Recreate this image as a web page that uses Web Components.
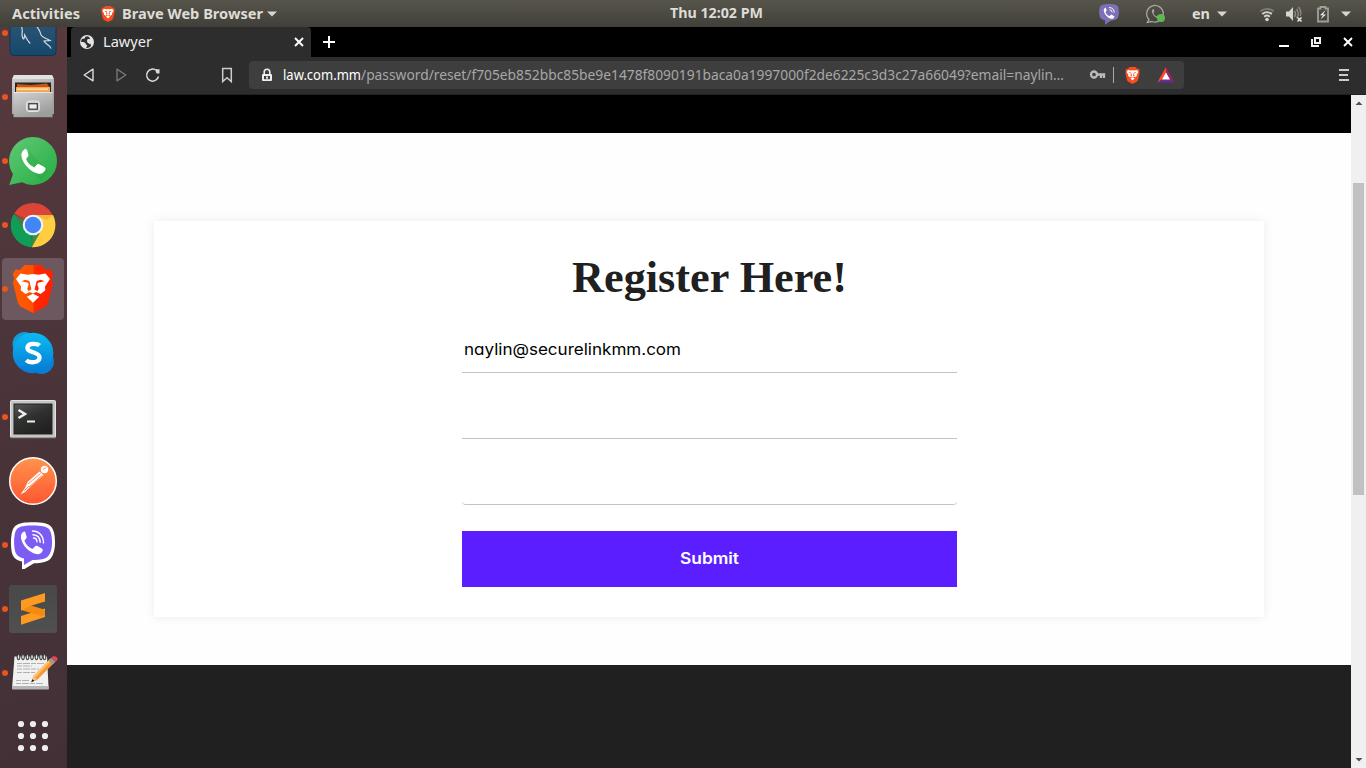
<!DOCTYPE html>
<html lang="en">
<head>
<meta charset="utf-8">
<title>Lawyer</title>
<style>
html,body{margin:0;height:100%;overflow:hidden;background:#000}
body{font-family:"Noto Sans","Open Sans",sans-serif}
</style>
</head>
<body>
<desktop-shell></desktop-shell>
<script>
const brave = (bg = 'url(#lg)') => `<defs><linearGradient id="lg"><stop offset="0" stop-color="#ff5a00"/><stop offset=".49" stop-color="#ff5000"/><stop offset=".54" stop-color="#ff2800"/><stop offset="1" stop-color="#ff2000"/></linearGradient></defs>
<path d="M15.500 0h17l4.500 5 4.500-.4 2.800 4.900-1.800 4.300 1.700 3.800-5 20q-.8 2.500-3 4.200L24 48l-12.200-6.200q-2.200-1.700-3-4.200l-5-20 1.700-3.800-1.800-4.300L6.500 4.600l4.500.4z" fill="${bg}"/>
<path fill="#fff" fill-rule="evenodd" d="M11.500 8.500l7 1.200 5.500-.8 5.500.8 7-1.200L41 14l-5 7.500.3 3.800L31.500 29 24 25.500 16.500 29l-4.800-3.700.3-3.800L7 14zM12.500 16.300l6.500 1.400.7 1.800-1.500 4 1.300 2.700 3-1.700L20.300 16l-4-1.200zM35.500 16.300l-6.500 1.400-.7 1.800 1.500 4-1.300 2.700-3-1.700L27.700 16l4-1.200z"/>
<path fill="#fff" d="M19.800 26.500l4.200-3 4.200 3-4.200 2zM17.800 31.800l6.200-3 6.200 3-6.200 6z"/>`;
const phone = 'M6.600 3.200C5 4 3.500 6 4 9c1.200 6.500 7 12.400 13.300 14 2.800.6 5-.8 5.700-2.700.4-1.200.2-1.700-.6-2.200l-4.200-2.300c-.8-.3-1.300-.2-1.800.4l-1.300 1.600c-.5.600-1 .6-1.700.3-2.900-1.400-5-3.600-6.100-6.200-.3-.6-.1-1 .3-1.500l1.100-1.400c.4-.6.4-1 .2-1.700L7.800 3.800c-.3-.7-.6-.9-1.200-.6z';
const ICONS = {
mysql:[48,`<defs><linearGradient id="g" x2="0" y2="1"><stop stop-color="#345a78"/><stop offset="1" stop-color="#15486b"/></linearGradient></defs><rect x="1" y="0" width="46" height="46.500" rx="4" fill="url(#g)" stroke="#17344e"/><g fill="none" stroke="#d5dde4" stroke-width="1.200"><path d="M12.500 18c2 4-.5 7 1 10 1 4 2 1 2.200-2 1 2 2 5 5.500 8.500"/><path d="M27 16c2 4 4 5 5 10 2 3 5 3 9 5.500l-6 .5c1 3 5 3 7 7.500"/></g>`],
files:[48,`<defs><linearGradient id="g" x2=".5" y2="1"><stop stop-color="#d2d2d2"/><stop offset="1" stop-color="#9d9d9d"/></linearGradient></defs><path d="M5 2h38l2 5v34H3V7z" fill="url(#g)"/><path d="M5 2h38l2 4H3z" fill="#e2e2e2"/><path d="M6 9.500h36V20H6z" fill="#292522"/><path d="M8 11l14 1 16-1.500 2 3V20H8z" fill="#c5541c"/><path d="M7 14h34v6H7z" fill="#f2a850"/><path d="M8 15.500h31v1.300H8z" fill="#ffe5b8"/><path d="M4.500 19h39v25h-39z" fill="url(#g)"/><path d="M4.500 19h39v.8h-39z" fill="#eee"/><rect x="17.500" y="28" width="13" height="10.500" rx="2.500" fill="#ccc" stroke="#e4e4e4"/><rect x="19.800" y="30.700" width="8.500" height="5.500" fill="#eee" stroke="#444" stroke-width="1.300"/><path d="M5 44.500h39" stroke="#5a5052"/>`],
whatsapp:[48,`<defs><linearGradient id="g" x2="1" y2="1"><stop stop-color="#61c976"/><stop offset="1" stop-color="#24ad42"/></linearGradient></defs><path d="M24 0a24 24 0 1 1-11 45.300L.2 48 4 37.200A24 24 0 0 1 24 0z" fill="url(#g)"/><path d="M20 14l20 21-8 9-17-20z" fill="#249c3f" opacity=".25"/><path transform="translate(8.200 8.600) scale(1.200)" d="${phone}" fill="#fff" stroke="#fff" stroke-width=".8"/>`],
chrome:[48,`<path d="M24 24L5.200 12.500A22.200 22.200 0 0 1 44 14.500z" fill="#db4437"/><path d="M24 24L23 46.200A22.200 22.200 0 0 1 4.700 13z" fill="#0f9d58"/><path d="M24 24L23 46.200A22.200 22.200 0 0 0 44 14H24z" fill="#ffcd40"/><path d="M24 14h20L38 19 29 15z" fill="#e5ab35" opacity=".6"/><path d="M5 13l10 16 3-12z" fill="#ae352c" opacity=".35"/><path d="M23 46l9-16-10 4z" fill="#127f43" opacity=".8"/><circle cx="24" cy="24" r="10.300" fill="#f3f4f7"/><circle cx="24" cy="24" r="8.200" fill="#4285f4"/>`],
brave:[48,brave()],
bravesmall:[48,brave('#fb4a1c')],
skype:[48,`<defs><linearGradient id="g" x2="0" y2="1"><stop stop-color="#09bdf2"/><stop offset="1" stop-color="#0878d4"/></linearGradient></defs><circle cx="15.500" cy="15" r="12" fill="#169cdb"/><circle cx="32.500" cy="32.500" r="12.500" fill="#087fd0"/><circle cx="24" cy="24" r="20.300" fill="url(#g)"/><path d="M30.500 16.500c-2-2-11-3-12 1.500-1.300 6.500 12 4 12 10.500 0 6-10.500 5.500-13.300 2.800" fill="none" stroke="#fff" stroke-width="4.300"/>`],
terminal:[48,`<defs><linearGradient id="g" x2=".6" y2="1"><stop stop-color="#555"/><stop offset=".5" stop-color="#303230"/><stop offset="1" stop-color="#202120"/></linearGradient></defs><rect x="1.500" y="7.500" width="45" height="37" rx="1" fill="#c5c5c5" stroke="#e3e3e3"/><path d="M1 44.800h46" stroke="#777"/><rect x="5" y="11" width="38" height="30" fill="url(#g)" stroke="#222"/><path d="M9.500 17l6.500 4-6.500 4" fill="none" stroke="#eee" stroke-width="2.500"/><path d="M18 28.500h8" stroke="#eee" stroke-width="2"/>`],
postman:[48,`<defs><linearGradient id="g" x2="0" y2="1"><stop stop-color="#ff934d"/><stop offset="1" stop-color="#ff5630"/></linearGradient></defs><circle cx="24" cy="24" r="23.300" fill="url(#g)" stroke="#fff" stroke-width="1.500"/><circle cx="35.500" cy="12.500" r="3.700" fill="#fff"/><path d="M30.500 14.500l4 3.500L22 29l-6 6-4.500 2.500 4.500-6.500 3-6.500z" fill="#fff"/><path d="M34 12.500l3.500-2M31.500 16.500L19 27M33 18.500L20 30M15 34l5-5" stroke="#ff7042" fill="none" stroke-width=".8"/>`],
viber:[48,`<path d="M24 1.200c9.500 0 16 1.200 18.700 5C45 10 46 14 46 22s-2.500 14.500-6 17c-3 2-9 3.500-15 3.300L15.500 48H13v-7.500C7 39 4.500 37 3 32 2 28 1.500 19 2.500 14 4 4 8 1.200 24 1.200z" fill="#fff"/><path d="M24 4.500c8 0 13.800 1 16 3.600C42 11 43 15 43 21.500s-1.500 12-5 14.800c-3 2-8.500 3-14.500 2.700L15 44v-6.500c-5-1.200-7.500-3-8.800-7C5 26 4.700 19 5.600 14.500 7 6.200 10 4.500 24 4.500z" fill="#7d5cf4"/><path transform="translate(7.500 7) scale(1.130)" d="${phone}" fill="#fff"/><g fill="none" stroke="#fff" stroke-width="1.400" stroke-linecap="round"><path d="M23.500 10c6.500 0 11 4.500 11 12M24 13.700c4.200.2 7 3 7.200 7.500M24.500 17c2.200 0 3.300 1.500 3.500 3.800"/></g>`],
sublime:[48,`<defs><linearGradient id="g" x2="0" y2="1"><stop stop-color="#484848"/><stop offset="1" stop-color="#505050"/></linearGradient></defs><rect width="48" height="48" rx="3" fill="url(#g)"/><path d="M12 31l24-7.500V32L12 39.700z" fill="#ff9a20"/><path d="M12 17.500l24 7.200v5l-3 1.500L12 25z" fill="#f38b12"/><path d="M12 15.500L36 8v8.500l-15 4.500-9 4.500z" fill="#ff9a20"/>`],
notes:[48,`<path d="M5.500 7.500h32.500l1.500 30v2H3.200v-2z" fill="#f1f1f1"/><path d="M3.200 37h36.500v3.500H3.200z" fill="#b5b5b5"/><g stroke="#444" fill="#eee" stroke-width="1.100">${[9.5,14,18.500,23,27.500,32,35.500].map(x=>`<ellipse cx="${x}" cy="8" rx="1.300" ry="2.600"/>`).join('')}</g><g stroke="#b0b0b0" stroke-dasharray="5 1 7 1"><path d="M8 14.500h27M8 17h15M8 20h22M8 23.500h18M7 31.500h14M7 34.500h27"/></g><path d="M22.500 33l2-6L41 10l4 4-17 17z" fill="#f49a35"/><path d="M24.500 27L41 10l1.500 1.500L26 29z" fill="#ffc06a"/><path d="M22.500 33l2-6 3.500 4z" fill="#e7c594"/><path d="M22.300 33.200l1-3 2 1.600z" fill="#111"/><path d="M39.500 11.500l2.700-2.700 4.300 4-2.800 2.700z" fill="#999"/><path d="M42.300 8.700l1.700-1.500q5-.5 4.500 3.800l-2 1.800z" fill="#e34652"/>`],
apps:[48,[12,24,36].map(y=>[12,24,36].map(x=>`<circle cx="${x}" cy="${y-1}" r="3.100" fill="#eee"/>`).join('')).join('')],
vibertray:[20,`<path d="M10 0c6 0 8.500.8 9.300 3.200.9 3 .8 8-.3 10.400-.8 2-3.500 3-7.500 3.100L6 20.800v-4.500C2.500 15.600 1 14.500.5 11.500 0 9 .1 5.300.8 3.200 1.600.8 4 0 10 0z" fill="#7d70b8"/><path transform="translate(2.600 2) scale(.55)" d="${phone}" fill="#fff"/><path d="M10 3.500q5 .3 5.200 5M10.500 5.700q2.500.3 2.700 2.700" stroke="#fff" fill="none"/>`],
watray:[20,`<path d="M3 15.500A8.300 8.300 0 1 1 6 17.500L1.300 18.300z" fill="none" stroke="#a7a69f" stroke-width="1.300"/><path transform="translate(4 3.500) scale(.48)" d="${phone}" fill="#a7a69f"/><circle cx="15" cy="14" r="4" fill="#5cb950"/>`],
wifi:[16,`<g fill="none" stroke="#d6d5d0" stroke-width="1.800"><path d="M1.300 5.300Q8 .3 14.700 5.300" opacity=".35"/><path d="M3.200 8Q8 4.300 12.800 8"/><path d="M5.200 10.700Q8 8.300 10.800 10.700"/></g><circle cx="8" cy="13.500" r="1.800" fill="#d6d5d0"/>`],
volume:[18,`<path d="M1 6.500h3L8 2v14l-4-4.500H1z" fill="#d6d5d0"/><g fill="none" stroke="#8b8981" stroke-width="1.400"><path d="M9.500 6q2 3 0 6M11.500 4q3.500 5 0 9M13.500 2q4 6 1.500 9"/></g><path d="M12.500 12.500l4 4m0-4l-4 4" stroke="#e8e7e4" stroke-width="1.500"/>`],
battery:[16,`<path d="M3 2.500h2.500V1h5v1.500H13V15.500H3z" fill="none" stroke="#a09f99" stroke-width="1.800"/><path d="M10.500 4L5 9.300h3L5.500 13.500 11 8.500H8z" fill="#eee"/>`],
globe:[16,`<circle cx="8" cy="8" r="7" fill="#e4e4e4"/><path d="M9 2.300c-2 0-3.300.7-3.500 2.500H3.200C2.300 6 2 7 2.200 8c2.500-.2 4 .3 4.300 1.500.3 1.500 1.800 1 1.700 2.500L7 13.800c2 .3 3.800-.3 5-1.800l-.5-2.500-2.300-.8-1.500-1.500 1-1.500h2l.3-1.500z" fill="#2f2f2f"/><path d="M8.500 5h3l1.700 3.500-2 1.500-2.500-1z" fill="#e4e4e4"/>`],
close:[12,`<path d="M2 2l8 8M10 2l-8 8" stroke="#fff" stroke-width="1.900"/>`],
plus:[14,`<path d="M7 1v12M1 7h12" stroke="#fff" stroke-width="2"/>`],
back:[16,`<path d="M12 2.200v11.600L3.200 8z" fill="none" stroke="#ddd" stroke-width="1.400" stroke-linejoin="round"/>`],
fwd:[16,`<path d="M4 2.200v11.600L12.800 8z" fill="none" stroke="#777" stroke-width="1.400" stroke-linejoin="round"/>`],
reload:[16,`<path d="M13.500 9.500A6 6 0 1 1 11.500 3.500" fill="none" stroke="#ddd" stroke-width="1.500"/><path d="M10.800 2.200h3.700v4.300h-2.700l-1-1.400z" fill="#ddd"/>`],
bookmark:[16,`<path d="M3.700 1.500h8.600v13L8 10.700l-4.300 3.800z" fill="none" stroke="#ccc" stroke-width="1.500"/>`],
lock:[14,`<rect x="2" y="6" width="10" height="7" rx="1" fill="#eee"/><path d="M4.200 6V4a2.800 2.800 0 0 1 5.600 0v2" fill="none" stroke="#eee" stroke-width="1.600"/><path d="M4 8h6v3.200H4z" fill="#3d3d3d"/><rect x="6" y="8.600" width="2" height="2" fill="#eee"/>`],
key:[16,`<circle cx="5" cy="7.500" r="3" fill="none" stroke="#bbb" stroke-width="2.300"/><path d="M8 7.500h7v3.500M12 7.500v3.500" fill="none" stroke="#bbb" stroke-width="2.300"/>`],
bat:[18,`<path d="M9 1L.3 16.500 9 11z" fill="#ff4724"/><path d="M9 1l8.700 15.500L9 11z" fill="#9e1f63"/><path d="M.3 16.500h17.400L9 11z" fill="#662d91"/><path d="M9 6.500l4 7H5z" fill="#fff"/>`],
caret:[10,`<path d="M0 2.500h10L5 7.500z" fill="#d6d5d0"/>`],
min:[12,`<path d="M1 10h10" stroke="#fff" stroke-width="2"/>`],
restore:[12,`<path d="M5 2h5v5H5z" fill="none" stroke="#eee" stroke-width="2"/><path d="M2 3v7h7" fill="none" stroke="#eee" stroke-width="2"/>`],
menu:[12,`<path d="M1 1h10M1 6h9M1 11h10" stroke="#ccc" stroke-width="2"/>`],
up:[8,`<path d="M.5 6L4 2.500 7.500 6z" fill="#505050"/>`],
down:[8,`<path d="M.5 2L4 5.500 7.500 2z" fill="#505050"/>`]
};
function define(name, html, setup){
  const t=document.createElement('template'); t.innerHTML=html;
  customElements.define(name, class extends HTMLElement{
    connectedCallback(){
      if(this.shadowRoot) return;
      const r=this.attachShadow({mode:'open'});
      r.append(t.content.cloneNode(true));
      if(setup) setup(this,r);
    }
  });
}
define('ui-icon','<style>:host{display:block;flex:none}svg{display:block;overflow:visible}</style><div></div>',(el,r)=>{
  const [box,art]=ICONS[el.getAttribute('name')]; const s=el.getAttribute('size')||box;
  r.querySelector('div').innerHTML=`<svg width="${s}" height="${s}" viewBox="0 0 ${box} ${box}">${art}</svg>`;
});
/* A one-line label whose glyphs are condensed or widened to a set advance width. */
define('ui-label','<style>:host{display:block;flex:none;white-space:nowrap}span{display:inline-block;transform-origin:0 50%}</style><span><slot></slot></span>',(el,r)=>{
  const w=+el.getAttribute('width'), s=r.querySelector('span');
  el.style.width=w+'px';
  const n=s.getBoundingClientRect().width;
  if(n) s.style.transform=`scaleX(${w/n})`;
});
define('top-panel',`<style>
:host{display:grid;grid-template-columns:670px 93px 1fr;height:27px;background:linear-gradient(#57554b,#403f39);color:#dedcd6;font:bold 14px/26px "Noto Sans",sans-serif;box-sizing:border-box}
div{display:flex;align-items:center}
.l{padding-left:12px}.l ui-icon:first-of-type{margin:0 6px 0 20px}.l ui-icon:last-of-type{margin-left:4px}
.r{justify-content:flex-end;padding-right:15px}
</style>
<div class="l"><ui-label width="68">Activities</ui-label><ui-icon name="bravesmall" size="16"></ui-icon><ui-label width="141">Brave Web Browser</ui-label><ui-icon name="caret"></ui-icon></div>
<ui-label width="93">Thu 12:02 PM</ui-label>
<div class="r"><ui-icon name="vibertray" style="margin-right:27px"></ui-icon><ui-icon name="watray" style="margin-right:26px"></ui-icon><ui-label width="18">en</ui-label><ui-icon name="caret" style="margin:0 32px 0 7px"></ui-icon><ui-icon name="wifi" style="margin-right:10px"></ui-icon><ui-icon name="volume" style="margin-right:12px"></ui-icon><ui-icon name="battery" style="margin-right:10px"></ui-icon><ui-icon name="caret"></ui-icon></div>`);
define('dock-item',`<style>
:host{display:grid;grid-template-columns:7px 48px;align-items:center;height:62px;margin:1px 2px;width:62px;border-radius:4px;box-sizing:border-box;flex:none}
:host([active]){background:#6c585e}
i{width:6px;height:6px;border-radius:50%;background:#e95420}i.off{visibility:hidden}
</style><i></i>`,(el,r)=>{
  const ic=document.createElement('ui-icon'); ic.setAttribute('name',el.getAttribute('name'));
  r.append(ic);
  if(!el.hasAttribute('running')) r.querySelector('i').className='off';
});
define('app-dock',`<style>
:host{display:block;overflow:hidden;background:linear-gradient(165deg,#573a3d,#4a343a 50%,#433037)}
div{display:flex;flex-direction:column;margin-top:-26px}
</style><div>
<dock-item name="mysql" running></dock-item><dock-item name="files" running></dock-item><dock-item name="whatsapp" running></dock-item><dock-item name="chrome" running></dock-item><dock-item name="brave" running active></dock-item><dock-item name="skype"></dock-item><dock-item name="terminal" running></dock-item><dock-item name="postman"></dock-item><dock-item name="viber" running></dock-item><dock-item name="sublime" running></dock-item><dock-item name="notes" running></dock-item><dock-item name="apps"></dock-item></div>`);
define('tab-strip',`<style>
:host{display:flex;height:30px;background:#000;align-items:center;padding:0 12px 0 4px;box-sizing:border-box}
.tab{display:flex;align-items:center;width:240px;height:30px;background:#2d2d2d;border-radius:4px 4px 0 0;padding:0 6px 0 8px;box-sizing:border-box;color:#eee;font-size:14px;line-height:28px}
.tab ui-label{margin-left:8px}.tab ui-icon:last-child{margin-left:auto}
.win{margin-left:auto;display:flex;gap:20px}
</style><div class="tab"><ui-icon name="globe"></ui-icon><ui-label width="49">Lawyer</ui-label><ui-icon name="close"></ui-icon></div><ui-icon name="plus" style="margin-left:11px"></ui-icon>
<div class="win"><ui-icon name="min"></ui-icon><ui-icon name="restore"></ui-icon><ui-icon name="close"></ui-icon></div>`);
define('tool-bar',`<style>
:host{display:flex;height:38px;background:#2d2d2d;border-bottom:1px solid #202020;align-items:center;padding:0 16px 1px 14px;box-sizing:border-box}
.url{display:flex;align-items:center;width:935px;height:28px;margin-left:14px;border-radius:4px;background:#3e3e3e;box-sizing:border-box;padding:0 9px 0 11px;font-size:14px;line-height:26px;color:#a7a7a7}
.sep{width:1px;height:16px;background:#aaa;margin:0 10px 0 8px}
</style><ui-icon name="back"></ui-icon><ui-icon name="fwd" style="margin-left:16px"></ui-icon><ui-icon name="reload" style="margin-left:16px"></ui-icon><ui-icon name="bookmark" style="margin-left:58px"></ui-icon>
<div class="url"><ui-icon name="lock"></ui-icon><ui-label width="78" style="margin-left:9px;color:#fff">law.com.mm</ui-label><ui-label width="703">/password/reset/f705eb852bbc85be9e1478f8090191baca0a1997000f2de6225c3d3c27a66049?email=naylin…</ui-label><ui-icon name="key" style="margin-left:25px"></ui-icon><span class="sep"></span><ui-icon name="bravesmall" size="17"></ui-icon><ui-icon name="bat" style="margin-left:auto"></ui-icon></div>
<ui-icon name="menu" style="margin-left:auto"></ui-icon>`);
define('form-field',`<style>:host{display:flex;height:48px;box-sizing:border-box;border-bottom:1px solid #c4c4c4;margin-bottom:18px;padding-left:2px;color:#000;font:16px/48px Inter,"Open Sans",sans-serif;font-feature-settings:"cv11"}:host([rounded]){border-radius:4px;margin-bottom:26px}</style><slot></slot>`);
define('register-form',`<style>
:host{display:flex;flex-direction:column;align-items:center;width:1110px;height:396px;box-sizing:border-box;background:#fff;box-shadow:0 0 10px rgba(0,0,0,.075);padding-top:28px}
h1{margin:0 0 20px;height:56px;color:#202020;font:bold 45px/56px "Liberation Serif",serif}
section{width:495px}
button{all:unset;display:flex;justify-content:center;width:495px;height:56px;background:#5b1fff;color:#fff;font:600 16px/55px Inter,"Open Sans",sans-serif}
</style><h1><ui-label width="275">Register Here!</ui-label></h1>
<section><form-field><ui-label width="217">naylin@securelinkmm.com</ui-label></form-field><form-field></form-field><form-field rounded></form-field>
<button><ui-label width="59">Submit</ui-label></button></section>`);
define('page-view',`<style>
:host{display:grid;grid-template-columns:1fr 15px;flex:1;min-height:0;overflow:hidden}
.page{display:grid;grid-template-rows:38px 532px 103px;background:#fff}
.head{background:#000}.foot{background:#202020}
main{padding:88px 0 0 87px;background:#fefefe}
.bar{display:flex;flex-direction:column;align-items:center;background:#f0f0f0;padding:4px 0}
.thumb{width:11px;height:312px;margin-top:76px;background:#c1c1c1}
.bar ui-icon:last-child{margin-top:auto}
</style><div class="page"><div class="head"></div><main><register-form></register-form></main><div class="foot"></div></div>
<div class="bar"><ui-icon name="up"></ui-icon><div class="thumb"></div><ui-icon name="down"></ui-icon></div>`);
define('browser-window',`<style>:host{display:flex;flex-direction:column;min-width:0;min-height:0}</style><tab-strip></tab-strip><tool-bar></tool-bar><page-view></page-view>`);
define('desktop-shell',`<style>:host{display:grid;grid-template:27px 741px/67px 1299px;width:1366px;height:768px;overflow:hidden}top-panel{grid-column:1/3}</style><top-panel></top-panel><app-dock></app-dock><browser-window></browser-window>`);
</script>
</body>
</html>
